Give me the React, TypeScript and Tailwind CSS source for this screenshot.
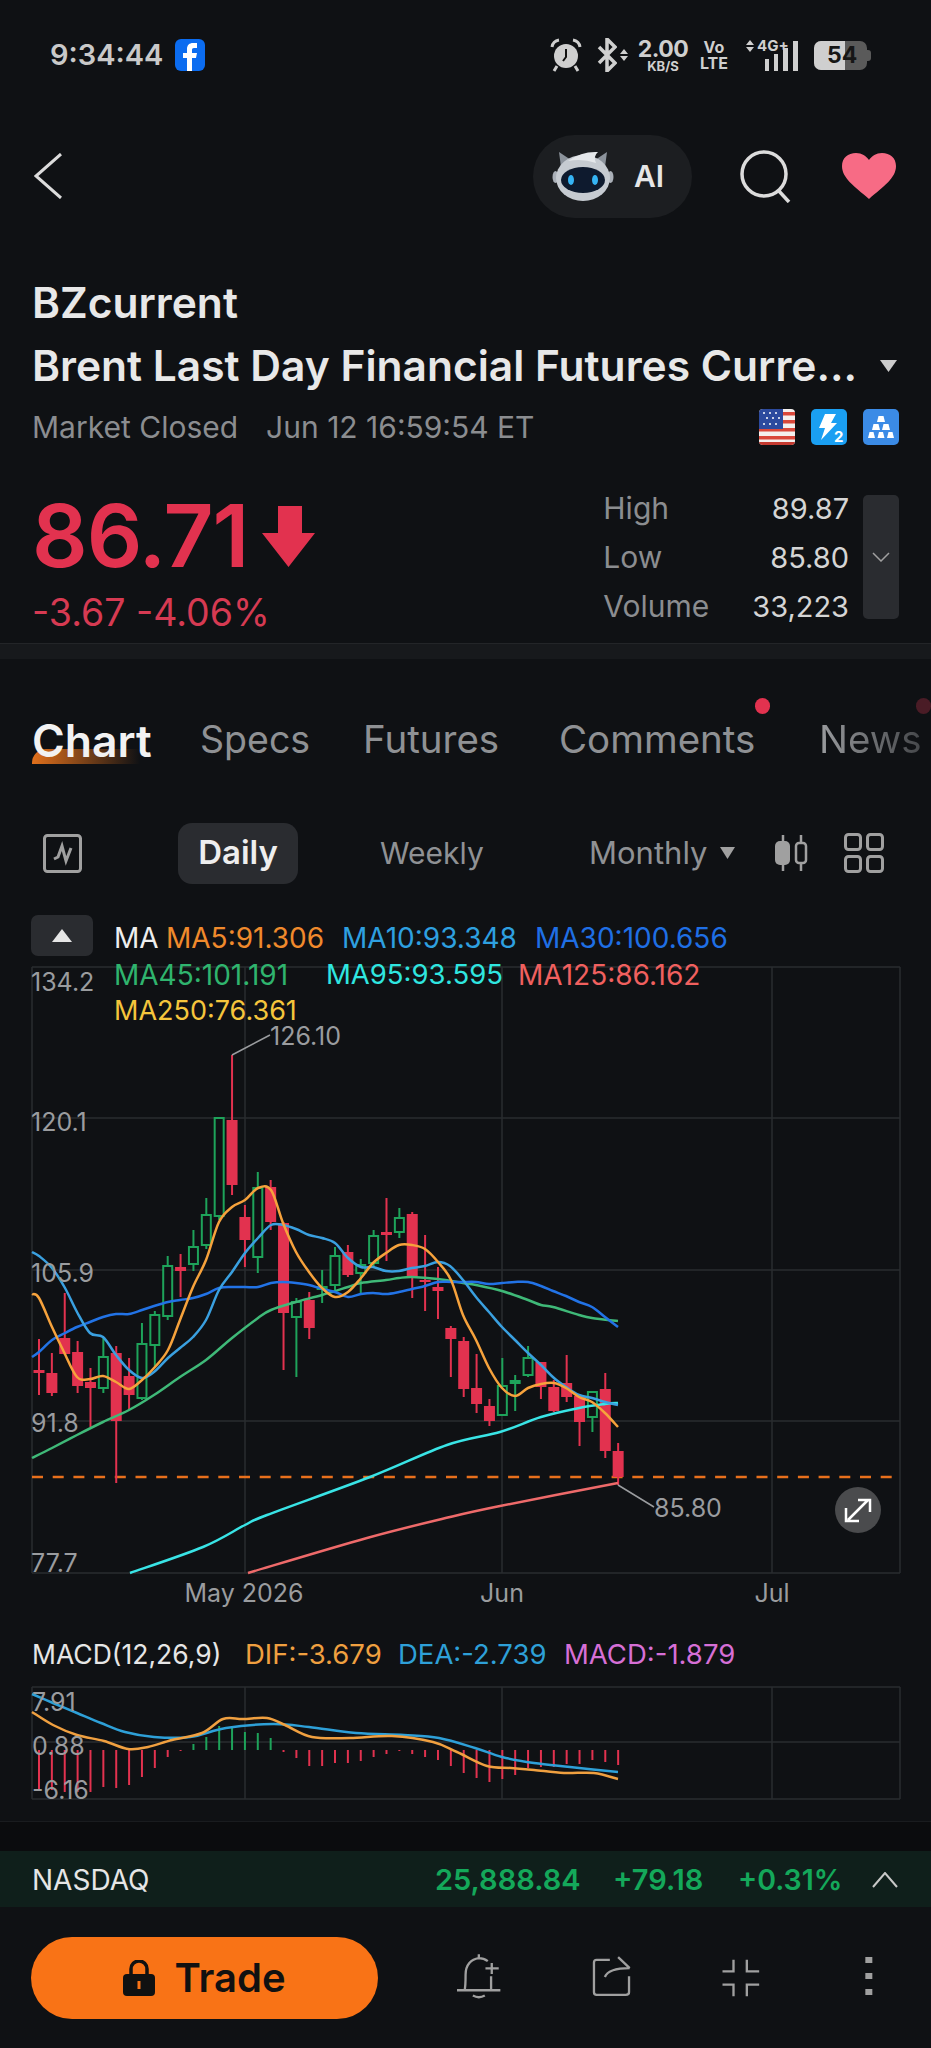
const RED = "#e2324f";
const GREEN = "#1ea35a";

// candles: [wick top, wick bottom, body top, body bottom, up]
const candles: [number, number, number, number, boolean][] = [
  [1339, 1395, 1370, 1373, false],
  [1353, 1396, 1373, 1393, false],
  [1293, 1355, 1338, 1354, false],
  [1341, 1393, 1352, 1386, false],
  [1368, 1427, 1382, 1388, false],
  [1338, 1393, 1357, 1388, true],
  [1346, 1483, 1353, 1421, false],
  [1358, 1410, 1376, 1395, false],
  [1323, 1400, 1344, 1398, true],
  [1311, 1367, 1315, 1345, true],
  [1256, 1320, 1266, 1316, true],
  [1254, 1297, 1267, 1271, false],
  [1230, 1271, 1247, 1264, true],
  [1198, 1249, 1215, 1245, true],
  [1118, 1220, 1118, 1216, true],
  [1055, 1195, 1120, 1185, false],
  [1205, 1267, 1217, 1240, false],
  [1172, 1273, 1188, 1257, true],
  [1180, 1230, 1187, 1222, false],
  [1222, 1370, 1223, 1313, false],
  [1298, 1377, 1302, 1317, true],
  [1292, 1339, 1300, 1328, false],
  [1270, 1303, 1287, 1289, true],
  [1247, 1290, 1256, 1285, true],
  [1245, 1277, 1252, 1275, false],
  [1259, 1293, 1265, 1273, true],
  [1230, 1267, 1236, 1263, true],
  [1198, 1261, 1232, 1235, false],
  [1208, 1238, 1218, 1232, true],
  [1212, 1298, 1214, 1277, false],
  [1235, 1311, 1280, 1282, false],
  [1267, 1319, 1287, 1291, false],
  [1326, 1377, 1328, 1339, false],
  [1337, 1397, 1341, 1389, false],
  [1354, 1413, 1388, 1404, false],
  [1399, 1426, 1406, 1421, false],
  [1358, 1415, 1386, 1415, true],
  [1375, 1411, 1381, 1383, true],
  [1346, 1377, 1358, 1375, true],
  [1362, 1399, 1362, 1387, false],
  [1380, 1412, 1387, 1411, false],
  [1355, 1402, 1383, 1397, false],
  [1395, 1446, 1396, 1422, false],
  [1391, 1432, 1392, 1417, true],
  [1373, 1458, 1389, 1451, false],
  [1443, 1485, 1451, 1477, false],
];

const candleX = (i: number) => 39 + i * 12.87;

const ma5 = "32,1294 39,1298 52,1327 63,1350 77,1377 90,1379 103,1376 116,1382 129,1389 142,1380 154,1368 168,1350 180,1320 193,1287 206,1260 219,1222 232,1207 245,1200 258,1188 271,1190 283,1223 296,1252 309,1272 322,1288 335,1297 348,1292 361,1278 373,1263 386,1253 399,1245 412,1245 425,1249 438,1262 451,1280 463,1315 476,1340 489,1368 502,1388 515,1396 528,1388 541,1384 554,1383 566,1388 579,1397 592,1402 605,1413 618,1427";
const ma10 = "32,1252 39,1256 52,1268 65,1288 77,1312 90,1333 103,1337 116,1355 129,1370 142,1378 154,1372 168,1358 180,1348 193,1337 206,1320 219,1290 232,1272 245,1253 258,1238 271,1225 283,1225 296,1229 309,1235 322,1238 335,1243 348,1258 361,1267 373,1267 386,1271 399,1271 412,1268 425,1266 438,1262 450,1266 463,1280 476,1297 489,1312 502,1327 515,1340 528,1353 541,1365 554,1378 566,1387 579,1395 592,1398 605,1402 618,1405";
const ma30 = "32,1357 39,1352 52,1340 65,1333 77,1327 90,1322 103,1317 116,1314 129,1314 142,1310 154,1306 168,1302 180,1300 193,1298 206,1294 219,1288 232,1287 245,1287 258,1287 271,1283 283,1282 296,1283 309,1285 322,1289 335,1292 348,1297 361,1294 373,1293 386,1294 399,1292 412,1289 425,1286 438,1282 451,1282 463,1282 476,1282 489,1284 502,1283 515,1282 528,1282 541,1286 553,1291 566,1296 579,1302 592,1307 605,1317 618,1327";
const ma45 = "32,1458 52,1448 77,1435 103,1422 129,1410 154,1395 180,1377 206,1360 232,1338 258,1318 271,1310 296,1302 322,1295 348,1287 361,1283 386,1280 399,1278 412,1277 438,1279 463,1283 476,1285 502,1291 528,1300 541,1305 553,1307 579,1315 592,1318 618,1321";
const ma95 = "130,1573 203,1547 245,1525 267,1515 370,1477 447,1445 500,1432 541,1417 579,1408 605,1404 618,1403";
const ma125 = "248,1573 367,1538 450,1517 500,1506 618,1483";

const dea = "32,1694 53,1703 77,1713 101,1723 125,1732 154,1737 190,1737 226,1728 273,1724 309,1727 356,1733 404,1735 439,1738 475,1748 502,1757 534,1763 570,1767 618,1772";
const dif = "32,1712 53,1725 77,1735 104,1741 128,1749 148,1747 172,1740 202,1733 223,1719 243,1719 267,1718 285,1725 312,1737 350,1738 392,1736 433,1742 457,1752 487,1766 511,1768 534,1770 564,1773 594,1773 618,1779";

// histogram bar ends, baseline is 1750
const macdBars = [1790, 1790, 1792, 1792, 1792, 1787, 1788, 1785, 1777, 1768, 1757, 1751, 1744, 1737, 1726, 1726, 1732, 1733, 1738, 1752, 1758, 1766, 1766, 1763, 1763, 1761, 1757, 1754, 1751, 1754, 1757, 1760, 1766, 1773, 1778, 1782, 1779, 1775, 1768, 1767, 1767, 1764, 1764, 1760, 1762, 1765];

// turns "x,y x,y" into a smooth path (catmull-rom)
const smooth = (pts: string) => {
  const p = pts.split(" ").map((s) => s.split(",").map(Number));
  let d = `M${p[0][0]} ${p[0][1]}`;
  for (let i = 0; i < p.length - 1; i++) {
    const a = p[Math.max(i - 1, 0)];
    const b = p[i];
    const c = p[i + 1];
    const e = p[Math.min(i + 2, p.length - 1)];
    const c1x = b[0] + (c[0] - a[0]) / 6;
    const c1y = b[1] + (c[1] - a[1]) / 6;
    const c2x = c[0] - (e[0] - b[0]) / 6;
    const c2y = c[1] - (e[1] - b[1]) / 6;
    d += `C${c1x} ${c1y} ${c2x} ${c2y} ${c[0]} ${c[1]}`;
  }
  return d;
};

const Alarm = () => (
  <svg width="32" height="34" viewBox="0 0 32 34" fill="none">
    <circle cx="16" cy="18" r="12" fill="#cfcfcf" />
    <path d="M16 11v8l-3 4" stroke="#111" strokeWidth="2" />
    <path d="M2 9 Q3 3 9 2 M30 9 Q29 3 23 2" stroke="#cfcfcf" strokeWidth="3" />
    <path d="M7 28l-3 5M25 28l3 5" stroke="#cfcfcf" strokeWidth="3" />
  </svg>
);

const Bluetooth = () => (
  <svg width="20" height="34" viewBox="0 0 20 34" fill="none">
    <path d="M2 9l16 16-8 8V1l8 8L2 25" stroke="#cfcfcf" strokeWidth="3.5" />
  </svg>
);

const UpDown = ({ h = 12 }: { h?: number }) => (
  <svg width="8" height={h} viewBox="0 0 8 12" fill="#cfcfcf">
    <path d="M4 0l4 5H0zM4 12L0 7h8z" />
  </svg>
);

const Mascot = () => (
  <svg width="62" height="50" viewBox="0 0 62 50">
    <path d="M9 16L7 1l12 8zM53 16l2-15-12 8z" fill="#8c939c" />
    <ellipse cx="3.500" cy="26" rx="3" ry="6" fill="#aab0b8" />
    <ellipse cx="58.500" cy="26" rx="3" ry="6" fill="#aab0b8" />
    <ellipse cx="31" cy="27" rx="27" ry="23" fill="#c6cbd1" />
    <path d="M16 10Q30 0 46 1Q41 5 44 12Q30 7 16 10z" fill="#e4e7ea" />
    <ellipse cx="31" cy="29" rx="22" ry="13" fill="#0e1a2e" />
    <ellipse cx="19" cy="29" rx="3" ry="5" fill="#35b4f5" />
    <ellipse cx="43" cy="29" rx="3" ry="5" fill="#35b4f5" />
  </svg>
);

const Trio = () => (
  <div className="flex gap-4">
    <svg width="36" height="36" viewBox="0 0 36 36" className="rounded-[4px]">
      <rect width="36" height="36" fill="#f4f0ee" />
      <rect y="3" width="36" height="3.5" fill="#d9483b" />
      <rect y="11" width="36" height="3.5" fill="#d9483b" />
      <rect y="19" width="36" height="3.5" fill="#d9483b" />
      <rect y="27" width="36" height="3.5" fill="#d9483b" />
      <rect y="33" width="36" height="3" fill="#c43a30" />
      <rect width="24" height="20" fill="#2c4a9e" />
      <g fill="#fff">
        <circle cx="5" cy="4" r="1" /><circle cx="11" cy="4" r="1" /><circle cx="17" cy="4" r="1" />
        <circle cx="8" cy="9" r="1" /><circle cx="14" cy="9" r="1" /><circle cx="20" cy="9" r="1" />
        <circle cx="5" cy="15" r="1" /><circle cx="11" cy="15" r="1" /><circle cx="17" cy="15" r="1" />
      </g>
    </svg>
    <svg width="36" height="36" viewBox="0 0 36 36" className="rounded-[5px]">
      <rect width="36" height="36" fill="#1a9ff2" />
      <path d="M14 5h11l-5 9h6L10 31l4-12H8z" fill="#fff" />
      <text x="23" y="33" fontSize="15" fontWeight="700" fill="#fff">2</text>
    </svg>
    <svg width="36" height="36" viewBox="0 0 36 36" className="rounded-[5px]">
      <rect width="36" height="36" fill="#3b8be6" />
      <g fill="#fff">
        <path d="M15.500 7h5l1.500 6h-8z" />
        <path d="M10.500 15h5l1.500 6H9zM20.500 15h5l1.500 6h-8z" />
        <path d="M6.500 23h4l1.500 6H5zM16 23h4l1.500 6h-7zM25.500 23h4l1.500 6h-7z" />
      </g>
    </svg>
  </div>
);

const MainChart = () => (
  <svg width="931" height="650" viewBox="0 960 931 650" className="block">
    <g stroke="#2a2c2f" strokeWidth="1.500">
      <path d="M32 967H900M32 1118H900M32 1270H900M32 1421H900M32 1573H900" />
      <path d="M32 967V1573M245 967V1573M502 967V1573M772 967V1573M900 967V1573" />
    </g>
    <path d="M32 1477H892" stroke="#e8701c" strokeWidth="2.500" strokeDasharray="11 9.700" />
    {candles.map(([wt, wb, bt, bb, up], i) => {
      const x = candleX(i);
      const color = up ? GREEN : RED;
      return (
        <g key={i}>
          <line x1={x} x2={x} y1={wt} y2={wb} stroke={color} strokeWidth="2" />
          {up ? (
            <rect x={x - 4.500} y={bt} width="9" height={bb - bt} fill="#0f1114" stroke={color} strokeWidth="2" />
          ) : (
            <rect x={x - 5.500} y={bt} width="11" height={bb - bt} fill={color} />
          )}
        </g>
      );
    })}
    <g fill="none" strokeWidth="2.500">
      <path d={smooth(ma125)} stroke="#ee6a6a" />
      <path d={smooth(ma95)} stroke="#39e4e6" />
      <path d={smooth(ma45)} stroke="#3fb978" />
      <path d={smooth(ma30)} stroke="#2273e6" />
      <path d={smooth(ma10)} stroke="#3aa0e0" />
      <path d={smooth(ma5)} stroke="#f6a23c" />
    </g>
    <g fill="#9a9c9f" fontSize="25">
      <text x="31" y="991">134.2</text>
      <text x="31" y="1131">120.1</text>
      <text x="31" y="1282">105.9</text>
      <text x="31" y="1432">91.8</text>
      <text x="31" y="1572">77.7</text>
      <text x="244" y="1602" textAnchor="middle">May 2026</text>
      <text x="502" y="1602" textAnchor="middle">Jun</text>
      <text x="772" y="1602" textAnchor="middle">Jul</text>
      <text x="270" y="1045">126.10</text>
      <text x="654" y="1517">85.80</text>
    </g>
    <path d="M232 1055L270 1035M618 1485L654 1507" stroke="#9a9c9f" strokeWidth="1.500" fill="none" />
    <circle cx="858" cy="1510" r="23" fill="#4a4b4d" />
    <path d="M848 1520L868 1500M858 1500H870V1512M846 1508V1521H859" stroke="#fff" strokeWidth="2.500" fill="none" />
  </svg>
);

const MacdChart = () => (
  <svg width="931" height="124" viewBox="0 1685 931 124" className="block">
    <g stroke="#2a2c2f" strokeWidth="1.500">
      <path d="M32 1687H900M32 1742H900M32 1799H900" />
      <path d="M32 1687V1799M245 1687V1799M502 1687V1799M772 1687V1799M900 1687V1799" />
    </g>
    {macdBars.map((end, i) => (
      <line
        key={i}
        x1={candleX(i)}
        x2={candleX(i)}
        y1={1750}
        y2={end}
        stroke={end < 1750 ? GREEN : RED}
        strokeWidth="2"
      />
    ))}
    <g fill="none" strokeWidth="2.500">
      <path d={smooth(dea)} stroke="#2ea0d8" />
      <path d={smooth(dif)} stroke="#f0a040" />
    </g>
    <g fill="#9a9c9f" fontSize="25">
      <text x="32" y="1711">7.91</text>
      <text x="32" y="1755">0.88</text>
      <text x="32" y="1799">-6.16</text>
    </g>
  </svg>
);

export default function App() {
  return (
    <div className="w-[931px] h-[2048px] overflow-hidden bg-[#0f1114] font-['Inter',sans-serif] text-white">
      {/* status bar */}
      <div className="h-[110px] flex items-center pl-[50px]">
        <span className="text-[29px] font-semibold text-[#c9c9c9] w-[125px] whitespace-nowrap">9:34:44</span>
        <svg width="30" height="32" viewBox="0 0 30 32" className="rounded-[6px]">
          <rect width="30" height="32" fill="#0b6cf0" />
          <path d="M12 32V19H8v-5h4v-4c0-4 2.500-6 6-6h4v5h-3c-1.500 0-2 .700-2 2v3h5l-1 5h-4v13z" fill="#fff" />
        </svg>
        <div className="ml-[345px]"><Alarm /></div>
        <div className="ml-[15px]"><Bluetooth /></div>
        <div className="ml-[3px]"><UpDown /></div>
        <div className="ml-[10px] w-[50px] flex flex-col items-center text-[#cfcfcf] font-bold">
          <span className="text-[23px] leading-[21px] tracking-[-0.5px]">2.00</span>
          <span className="text-[13px] leading-[12px]">KB/S</span>
        </div>
        <div className="ml-[11px] w-[30px] flex flex-col items-center text-[#cfcfcf] font-bold">
          <span className="text-[16px] leading-[17px]">Vo</span>
          <span className="text-[16px] leading-[15px]">LTE</span>
        </div>
        <div className="ml-[17px] w-[53px] h-[32px] flex items-end gap-[5px] relative">
          <div className="absolute left-0 top-0 flex items-center gap-[3px]">
            <UpDown />
            <span className="text-[15px] leading-[14px] font-bold text-[#cfcfcf]">4G+</span>
          </div>
          <div className="ml-[19px] w-[4px] h-[12px] bg-[#cfcfcf]" />
          <div className="w-[4px] h-[17px] bg-[#cfcfcf]" />
          <div className="w-[5px] h-[23px] bg-[#cfcfcf]" />
          <div className="w-[5px] h-[30px] bg-[#cfcfcf]" />
        </div>
        <div className="ml-[15px] w-[53px] h-[29px] rounded-[7px] overflow-hidden flex relative bg-[#5a5a5a]">
          <div className="w-[31px] bg-[#cfcfcf]" />
          <span className="absolute left-[13px] top-0 text-[23px] leading-[29px] font-bold text-[#161616]">54</span>
        </div>
        <div className="w-[4px] h-[11px] bg-[#5a5a5a] rounded-r-[3px]" />
      </div>

      {/* nav */}
      <div className="h-[132px] flex items-center pl-[34px]">
        <svg width="28" height="46" viewBox="0 0 28 46" fill="none">
          <path d="M27 1L2 23l25 22" stroke="#dcdcdc" strokeWidth="3" />
        </svg>
        <div className="ml-[471px] w-[159px] h-[83px] rounded-full bg-[#1c1e21] flex items-center pl-[19px]">
          <Mascot />
          <span className="ml-[20px] text-[30px] font-semibold text-[#e6e6e6]">AI</span>
        </div>
        <svg className="ml-[48px]" width="52" height="54" viewBox="0 0 52 54" fill="none">
          <circle cx="24" cy="25" r="22" stroke="#dcdcdc" strokeWidth="3.500" />
          <path d="M38 41l11 12" stroke="#dcdcdc" strokeWidth="3.500" />
        </svg>
        <svg className="ml-[50px]" width="54" height="46" viewBox="0 0 54 46">
          <path d="M27 46C12 33 0 25 0 13 0 5 6 0 14 0c6 0 10 3 13 7 3-4 7-7 13-7 8 0 14 5 14 13 0 12-12 20-27 33z" fill="#f76b85" />
        </svg>
      </div>

      {/* title */}
      <div className="px-[32px]">
        <div className="pt-[30px] h-[92px] leading-[62px] text-[42.500px] font-semibold text-[#e8e8e8]">BZcurrent</div>
        <div className="h-[64px] flex items-center justify-between pr-[2px]">
          <span className="text-[42.500px] font-semibold text-[#e8e8e8] whitespace-nowrap">Brent Last Day Financial Futures Curre...</span>
          <svg width="17" height="12" viewBox="0 0 17 12" fill="#cccccc"><path d="M0 0h17L8.500 12z" /></svg>
        </div>
        <div className="h-[58px] flex items-center text-[30px] text-[#8b8d90]">
          <span>Market Closed</span>
          <span className="ml-[28px]">Jun 12 16:59:54 ET</span>
          <div className="ml-auto"><Trio /></div>
        </div>
      </div>

      {/* price */}
      <div className="h-[187px] flex px-[32px]">
        <div className="w-[572px]">
          <div className="h-[80px] mt-[40px] flex items-center">
            <span className="text-[87px] leading-[80px] font-semibold text-[#e2324f] tracking-[-1px]">86.71</span>
            <svg className="ml-[14px]" width="53" height="61" viewBox="0 0 53 61" fill={RED}>
              <path d="M16 0h24v27h13L26.500 61 0 27h16z" />
            </svg>
          </div>
          <div className="mt-[17px] h-[40px] leading-[40px] text-[37.500px] text-[#d63a52] whitespace-nowrap">-3.67 -4.06%</div>
        </div>
        <div className="w-[246px] mt-[28px]">
          <div className="h-[49px] flex items-center justify-between"><span className="text-[30px] text-[#8b8d90]">High</span><span className="text-[29px] text-[#d5d5d5]">89.87</span></div>
          <div className="h-[49px] flex items-center justify-between"><span className="text-[30px] text-[#8b8d90]">Low</span><span className="text-[29px] text-[#d5d5d5]">85.80</span></div>
          <div className="h-[49px] flex items-center justify-between"><span className="text-[30px] text-[#8b8d90]">Volume</span><span className="text-[29px] text-[#d5d5d5]">33,223</span></div>
        </div>
        <div className="ml-[14px] mt-[39px] w-[36px] h-[124px] rounded-[5px] bg-[#2a2c30] flex items-center justify-center">
          <svg width="18" height="10" viewBox="0 0 18 10" fill="none"><path d="M1 1l8 8 8-8" stroke="#a0a0a0" strokeWidth="1.500" /></svg>
        </div>
      </div>

      <div className="h-[16px] bg-[#17191c] border-t border-[#232528]" />

      {/* tabs */}
      <div className="h-[162px] pt-[56px] pl-[32px] relative overflow-hidden">
        <div className="flex items-center h-[50px] text-[38.500px] text-[#8f9194] whitespace-nowrap">
          <div className="relative w-[168px] h-[50px]">
            <span className="absolute left-0 top-[34px] w-[108px] h-[15px] rounded-tl-[14px] bg-gradient-to-r from-[#e0701c] to-transparent" />
            <span className="relative font-semibold text-[#f2f2f2] text-[44.500px] leading-[50px]">Chart</span>
          </div>
          <span className="w-[163px] text-[37.500px]">Specs</span>
          <span className="w-[196px]">Futures</span>
          <span className="w-[260px]">Comments</span>
          <span className="bg-gradient-to-r from-[#9a9c9f] to-[#45474a] bg-clip-text text-transparent">News</span>
        </div>
        <span className="absolute left-[755px] top-[39px] w-[15px] h-[16px] rounded-full bg-[#e2324f]" />
        <span className="absolute left-[916px] top-[39px] w-[15px] h-[16px] rounded-full bg-[#4a1c26]" />
      </div>

      {/* period row */}
      <div className="h-[64px] flex items-center pl-[43px] text-[31px] text-[#8f9194]">
        <svg width="39" height="39" viewBox="0 0 39 39" fill="none">
          <rect x="1.500" y="1.500" width="36" height="36" rx="3" stroke="#a0a0a0" strokeWidth="3" />
          <path d="M11 25l4-2 4-11 4 15 5-13" stroke="#a0a0a0" strokeWidth="3" />
        </svg>
        <div className="ml-[96px] w-[120px] h-[61px] rounded-[14px] bg-[#2a2c30] flex items-center justify-center font-semibold text-[33px] text-[#eeeeee]">Daily</div>
        <span className="ml-[82px] w-[101px] text-[30px]">Weekly</span>
        <span className="ml-[108px] w-[116px]">Monthly</span>
        <svg className="ml-[15px]" width="15" height="12" viewBox="0 0 15 12" fill="#a0a0a0"><path d="M0 0h15L7.500 12z" /></svg>
        <svg className="ml-[40px]" width="33" height="36" viewBox="0 0 33 36" fill="none">
          <path d="M8 0v36" stroke="#a0a0a0" strokeWidth="2.500" />
          <rect x="0" y="6" width="15" height="24" rx="5" fill="#a0a0a0" />
          <path d="M26 0v36" stroke="#a0a0a0" strokeWidth="2.500" />
          <rect x="21" y="8" width="10" height="20" rx="3" fill="#0f1114" stroke="#a0a0a0" strokeWidth="2.500" />
        </svg>
        <svg className="ml-[36px]" width="40" height="40" viewBox="0 0 40 40" fill="none" stroke="#a0a0a0" strokeWidth="3">
          <rect x="1.500" y="1.500" width="15" height="15" rx="3" />
          <rect x="23.500" y="1.500" width="15" height="15" rx="3" />
          <rect x="1.500" y="23.500" width="15" height="15" rx="3" />
          <rect x="23.500" y="23.500" width="15" height="15" rx="3" />
        </svg>
      </div>

      {/* MA legend sits over the top of the chart */}
      <div className="mt-[30px] h-[115px] -mb-[70px] relative z-10 flex pl-[31px] text-[28px]">
        <div className="w-[62px] h-[41px] rounded-[7px] bg-[#2a2c30] flex items-center justify-center">
          <svg width="20" height="13" viewBox="0 0 20 13" fill="#e6e6e6"><path d="M10 0l10 13H0z" /></svg>
        </div>
        <div className="ml-[21px] pt-[4px]">
          <div className="h-[37px] flex items-center whitespace-nowrap">
            <span className="w-[52px] text-[#eeeeee]">MA</span>
            <span className="w-[176px] text-[#f08a2c]">MA5:91.306</span>
            <span className="w-[193px] text-[#2ea0e0]">MA10:93.348</span>
            <span className="text-[#1f6fe5]">MA30:100.656</span>
          </div>
          <div className="h-[37px] flex items-center whitespace-nowrap">
            <span className="w-[212px] text-[#2fb46e]">MA45:101.191</span>
            <span className="w-[192px] text-[27.500px] text-[#2fe6e0]">MA95:93.595</span>
            <span className="text-[#f0605f]">MA125:86.162</span>
          </div>
          <div className="h-[37px] flex items-center whitespace-nowrap">
            <span className="text-[27px] text-[#f5c53c]">MA250:76.361</span>
          </div>
        </div>
      </div>

      <MainChart />

      {/* MACD */}
      <div className="mt-[25px] h-[40px] flex items-center pl-[32px] text-[27.500px] whitespace-nowrap">
        <span className="w-[213px] text-[26.500px] text-[#e6e6e6]">MACD(12,26,9)</span>
        <span className="w-[153px] text-[#f0a040]">DIF:-3.679</span>
        <span className="w-[166px] text-[#2ea0d8]">DEA:-2.739</span>
        <span className="text-[#d66fd6]">MACD:-1.879</span>
      </div>
      <div className="mt-[10px]"><MacdChart /></div>

      <div className="h-[13px] border-b border-[#1a1c1f]" />
      <div className="h-[29px] bg-[#0b0c0e]" />

      {/* index ticker */}
      <div className="h-[56px] pt-[2px] bg-[#0f1f1b] flex items-center pl-[32px] text-[29px] whitespace-nowrap">
        <span className="w-[403px] text-[28px] text-[#e6e6e6]">NASDAQ</span>
        <span className="w-[178px] font-semibold text-[#14a85a]">25,888.84</span>
        <span className="w-[125px] font-semibold text-[#14a85a]">+79.18</span>
        <span className="w-[134px] text-[28.500px] font-semibold text-[#14a85a]">+0.31%</span>
        <svg width="26" height="16" viewBox="0 0 26 16" fill="none"><path d="M1 15L13 1l12 14" stroke="#c8c8c8" strokeWidth="2" /></svg>
      </div>

      {/* bottom actions */}
      <div className="h-[141px] flex items-center pl-[31px] text-[#a0a0a0]">
        <div className="w-[347px] h-[82px] rounded-full bg-[#f97316] flex items-center justify-center gap-[19px] text-[#111111]">
          <svg width="32" height="36" viewBox="0 0 32 36">
            <path d="M8 15V9a8 8 0 0 1 16 0v6" fill="none" stroke="#111111" strokeWidth="3.500" />
            <rect y="14" width="32" height="22" rx="4" fill="#111111" />
            <rect x="14.500" y="21" width="3" height="8" fill="#f97316" />
          </svg>
          <span className="text-[40px] font-semibold">Trade</span>
        </div>
        <svg className="ml-[75px]" width="53" height="50" viewBox="40 100 160 150" fill="none" stroke="#a0a0a0" strokeWidth="7">
          <path d="M52 212H183M75 212C78 200 78 190 78 165C78 135 95 118 118 115C128 115 137 118 145 124M155 170V212M157 130V163M138 146H178M118 103V115M100 228Q118 238 136 228" />
        </svg>
        <svg className="ml-[84px]" width="43" height="50" viewBox="450 100 130 150" fill="none" stroke="#a0a0a0" strokeWidth="7">
          <path d="M510 120H470Q462 120 462 128V218Q462 226 470 226H558Q568 226 568 218V170M495 172Q505 145 570 145M535 112L570 145" />
        </svg>
        <svg className="ml-[87px]" width="42" height="50" viewBox="840 100 125 150" fill="none" stroke="#a0a0a0" strokeWidth="7">
          <path d="M880 120V155H847M920 120V155H957M847 195H880V230M957 195H920V230" />
        </svg>
        <svg className="ml-[101px]" width="12" height="50" viewBox="1270 100 36 150" fill="#a0a0a0">
          <rect x="1277" y="112" width="21" height="18" />
          <rect x="1277" y="160" width="21" height="18" />
          <rect x="1277" y="208" width="21" height="18" />
        </svg>
      </div>
    </div>
  );
}
